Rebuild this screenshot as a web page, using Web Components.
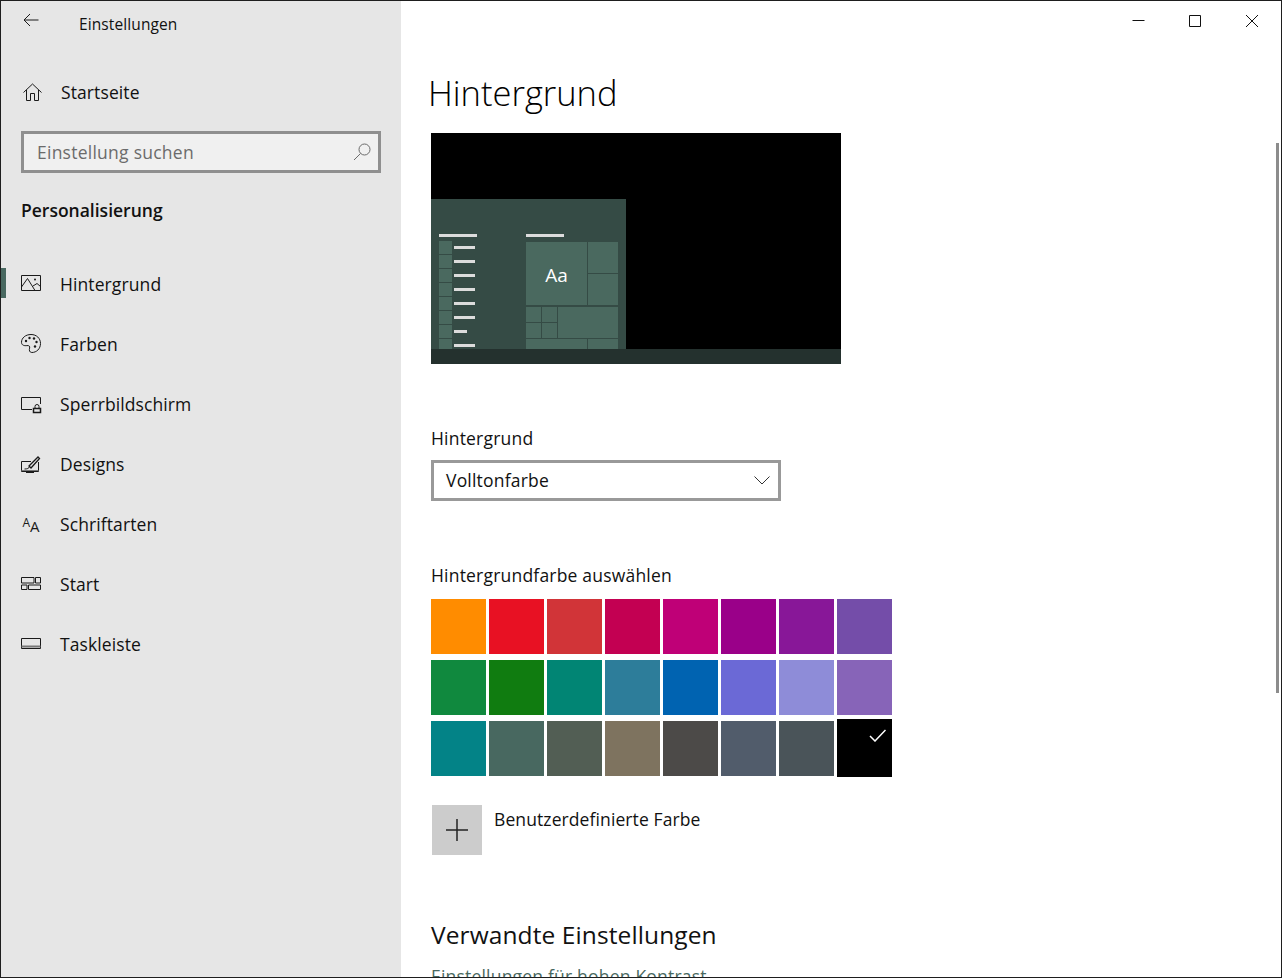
<!DOCTYPE html>
<html lang="de">
<head>
<meta charset="utf-8">
<title>Einstellungen</title>
<style>
  html, body { margin: 0; height: 100%; overflow: hidden; background: #fff; }
  body { font-family: "Open Sans", "Noto Sans", sans-serif; color: #111; }
</style>
</head>
<body>
<settings-window>
  <settings-sidebar slot="sidebar">
    <nav-item label="Hintergrund" icon="image" active></nav-item>
    <nav-item label="Farben" icon="palette"></nav-item>
    <nav-item label="Sperrbildschirm" icon="lock"></nav-item>
    <nav-item label="Designs" icon="brush"></nav-item>
    <nav-item label="Schriftarten" icon="fonts"></nav-item>
    <nav-item label="Start" icon="start"></nav-item>
    <nav-item label="Taskleiste" icon="taskbar"></nav-item>
  </settings-sidebar>
  <background-page slot="main"></background-page>
</settings-window>

<script>
  const ICONS = {
    image: `<path d="M1.500 2.500h19v15h-19z"/><path d="M1.500 14l6-8.500L15 17.500"/><path d="M13 13l4-2.500 3.500 3"/><circle cx="15" cy="6.500" r="1" fill="#1a1a1a" stroke="none"/>`,
    palette: `<path d="M11 1.500c-5.500 0-9.500 3.500-9.500 7.800 0 3.200 3.200 3.600 5.400 3.300 2.100-.3 3.300.7 2.700 2.500-.6 1.800-.2 4.400 2.200 4.400 4.800 0 8.700-3.700 8.700-9 0-5.200-4-9-9.500-9z"/><circle cx="6" cy="8" r="1.200" fill="#1a1a1a" stroke="none"/><circle cx="9.500" cy="5" r="1.200" fill="#1a1a1a" stroke="none"/><circle cx="14" cy="5.500" r="1.200" fill="#1a1a1a" stroke="none"/><circle cx="16.500" cy="9" r="1.200" fill="#1a1a1a" stroke="none"/><circle cx="15" cy="13.500" r="1.200" fill="#1a1a1a" stroke="none"/>`,
    lock: `<path d="M12 16.500H1.500v-12h19V11"/><path d="M13.500 15.500h7v4h-7z" stroke-width="1.500"/><path d="M15 15.500V13.500a2 2 0 0 1 4 0v2"/>`,
    brush: `<path d="M11 8.500H1.500v10h17V9"/><path d="M1.500 17.500h17" stroke="#777"/><path d="M10 18.500v1.500M6 19.500h8"/><path d="M9 13l9-9 1.500 1.500-8.500 9.500z" stroke-width="1.300"/><path d="M4.500 16c2.500 0 4.500-.5 5-2.500"/>`,
    fonts: `<text x="2.500" y="13.500" font-size="12" font-family="Open Sans" fill="#1a1a1a" stroke="none">A</text><text x="10" y="19" font-size="15" font-family="Open Sans" fill="#1a1a1a" stroke="none">A</text>`,
    start: `<path d="M1.500 4.500h12.500v5.500H1.500zM15.500 4.500h5v5.500h-5zM1.500 12h5.500v4.500H1.500zM8.500 12h12v4.500h-12z"/>`,
    taskbar: `<path d="M1.500 5.500h19v10h-19z"/><path d="M1.500 13.500h19" stroke-width="2" stroke="#777"/>`
  };

  class SettingsWindow extends HTMLElement {
    constructor() {
      super();
      this.attachShadow({ mode: "open" });
      this.shadowRoot.innerHTML = `
        <style>
          :host {
            display: grid;
            grid-template-columns: 400px 1fr;
            box-sizing: border-box;
            width: 1282px;
            height: 978px;
            border: 1px solid #1e1e1e;
            overflow: hidden;
            background: #fff;
          }
          .main { position: relative; min-width: 0; height: 976px; overflow: hidden; }
          .controls {
            display: flex;
            justify-content: flex-end;
            position: absolute;
            top: 0;
            right: 0;
          }
          .controls svg { display: block; width: 57px; height: 40px; fill: none; stroke: #111; stroke-width: 1; }
          .scroll {
            position: absolute;
            top: 142px;
            right: 2px;
            width: 3px;
            height: 550px;
            background: #8c8c8c;
          }
        </style>
        <slot name="sidebar"></slot>
        <div class="main">
          <slot name="main"></slot>
          <div class="controls">
            <svg viewBox="0 0 57 40"><path d="M22.500 19.500h12"/></svg>
            <svg viewBox="0 0 57 40"><path d="M22.500 14.500h11v11h-11z"/></svg>
            <svg viewBox="0 0 57 40"><path d="M22 14l12 12M34 14l-12 12"/></svg>
          </div>
          <div class="scroll"></div>
        </div>
      `;
    }
  }

  class SettingsSidebar extends HTMLElement {
    constructor() {
      super();
      this.attachShadow({ mode: "open" });
      this.shadowRoot.innerHTML = `
        <style>
          :host {
            display: block;
            height: 976px;
            background: #e6e6e6;
            font-size: 17.5px;
            letter-spacing: .1px;
          }
          svg { display: block; fill: none; stroke: #1a1a1a; stroke-width: 1; }
          .title { display: flex; align-items: center; height: 45px; padding-left: 22px; }
          .title svg { width: 16px; height: 14px; margin-top: -7px; }
          .title span { margin-left: 40px; font-size: 15.5px; margin-top: 1px; }
          .home { display: flex; align-items: center; height: 60px; margin-top: 16px; padding-left: 21px; }
          .home svg { width: 20px; height: 20px; margin-right: 19px; }
          .search {
            box-sizing: border-box;
            display: flex;
            align-items: center;
            justify-content: space-between;
            width: 360px;
            height: 42px;
            margin: 9px 0 0 20px;
            padding: 0 6px 0 13px;
            border: 3px solid #8f8f8f;
            background: #f0f0f0;
            color: #6b6b6b;
            letter-spacing: .25px;
          }
          .search span { margin-top: -1px; }
          .search svg { width: 20px; height: 20px; stroke: #6b6b6b; }
          h2 { margin: 24px 0 0 20px; height: 26px; font-size: 17.5px; line-height: 26px; font-weight: 600; letter-spacing: 0; }
          .nav { margin-top: 30px; }
        </style>
        <div class="title">
          <svg viewBox="0 0 16 14"><path d="M15.500 7H1M7 1L1 7l6 6"/></svg>
          <span>Einstellungen</span>
        </div>
        <div class="home">
          <svg viewBox="0 0 20 20"><path d="M1.500 10.500L10.500 2l9 8.500M4.500 8v10.500h4v-7h4v7h4V8"/></svg>
          <span>Startseite</span>
        </div>
        <div class="search">
          <span>Einstellung suchen</span>
          <svg viewBox="0 0 20 20"><circle cx="12.500" cy="7.500" r="5.500"/><path d="M8.500 11.500L2 18"/></svg>
        </div>
        <h2>Personalisierung</h2>
        <div class="nav"><slot></slot></div>
      `;
    }
  }

  class NavItem extends HTMLElement {
    constructor() {
      super();
      this.attachShadow({ mode: "open" });
    }

    connectedCallback() {
      const label = this.getAttribute("label") || "";
      const icon = ICONS[this.getAttribute("icon")] || "";
      this.shadowRoot.innerHTML = `
        <style>
          :host { display: flex; align-items: center; position: relative; height: 60px; padding-left: 19px; }
          :host([active])::before {
            content: "";
            position: absolute;
            left: 0;
            top: 15px;
            width: 5px;
            height: 30px;
            background: #486860;
          }
          svg { display: block; width: 22px; height: 20px; margin-right: 18px; overflow: visible; fill: none; stroke: #1a1a1a; stroke-width: 1; }
          span { margin-top: 1px; }
        </style>
        <svg viewBox="0 0 22 20">${icon}</svg>
        <span>${label}</span>
      `;
    }
  }

  class DesktopPreview extends HTMLElement {
    constructor() {
      super();
      this.attachShadow({ mode: "open" });
      const rows = [21, 21, 21, 21, 21, 21, 13, 21]
        .map(w => `<i class="cell"></i><b style="width:${w}px"></b>`).join("");
      this.shadowRoot.innerHTML = `
        <style>
          :host {
            display: flex;
            flex-direction: column;
            justify-content: flex-end;
            width: 410px;
            height: 231px;
            background: #000;
          }
          .menu {
            display: flex;
            box-sizing: border-box;
            width: 195px;
            height: 150px;
            padding: 35px 0 0 8px;
            background: #354b45;
            overflow: hidden;
          }
          .bar { display: block; height: 3px; background: #dcdcdc; width: 38px; }
          .apps { width: 87px; }
          .list {
            display: grid;
            grid-template-columns: 13px 1fr;
            grid-auto-rows: 13px;
            row-gap: 1px;
            column-gap: 2px;
            align-items: center;
            margin-top: 4px;
          }
          .list .cell { display: block; height: 13px; background: #4a695f; }
          .list b { display: block; height: 3px; background: #dcdcdc; }
          .grid {
            display: grid;
            grid-template-columns: 15px 15px 29px 30px;
            grid-template-rows: 31px 31px 0 15px 15px 15px;
            gap: 1px;
            margin-top: 5px;
          }
          .grid div { background: #4a695f; }
          .aa {
            grid-column: 1 / 4;
            grid-row: 1 / 3;
            display: flex;
            align-items: center;
            justify-content: center;
            padding-top: 2px;
            color: #fff;
            font-size: 19px;
          }
          .taskbar { height: 15px; background: #24312e; }
        </style>
        <div class="menu">
          <div class="apps">
            <span class="bar"></span>
            <div class="list">${rows}</div>
          </div>
          <div class="tiles">
            <span class="bar"></span>
            <div class="grid">
              <div class="aa">Aa</div>
              <div style="grid-column:4;grid-row:1"></div>
              <div style="grid-column:4;grid-row:2"></div>
              <div style="grid-column:1;grid-row:4"></div>
              <div style="grid-column:2;grid-row:4"></div>
              <div style="grid-column:1;grid-row:5"></div>
              <div style="grid-column:2;grid-row:5"></div>
              <div style="grid-column:3 / 5;grid-row:4 / 6"></div>
              <div style="grid-column:1 / 4;grid-row:6"></div>
              <div style="grid-column:4;grid-row:6"></div>
            </div>
          </div>
        </div>
        <div class="taskbar"></div>
      `;
    }
  }

  class ColorPicker extends HTMLElement {
    constructor() {
      super();
      this.attachShadow({ mode: "open" });
      const colors = [
        "#ff8c00", "#e81123", "#d13438", "#c30052", "#bf0077", "#9a0089", "#881798", "#744da9",
        "#10893e", "#107c10", "#018574", "#2d7d9a", "#0063b1", "#6b69d6", "#8e8cd8", "#8764b8",
        "#038387", "#486860", "#525e54", "#7e735f", "#4c4a48", "#515c6b", "#4a5459", "#000000"
      ];
      const cells = colors.map(c => c === "#000000"
        ? `<div class="sel" style="background:${c}"><svg viewBox="0 0 17 13"><path d="M1 7l5 5L16.500 1"/></svg></div>`
        : `<div style="background:${c}"></div>`).join("");
      this.shadowRoot.innerHTML = `
        <style>
          :host {
            display: grid;
            grid-template-columns: repeat(8, 55px);
            grid-auto-rows: 55px;
            column-gap: 3px;
            row-gap: 6px;
          }
          .sel { position: relative; height: 58px; margin-top: -2px; }
          svg { position: absolute; top: 10px; left: 32px; width: 17px; height: 13px; fill: none; stroke: #fff; stroke-width: 1.5; }
        </style>
        ${cells}
      `;
    }
  }

  class BackgroundPage extends HTMLElement {
    constructor() {
      super();
      this.attachShadow({ mode: "open" });
      this.shadowRoot.innerHTML = `
        <style>
          :host {
            display: block;
            box-sizing: border-box;
            height: 976px;
            padding: 0 0 0 30px;
            overflow: hidden;
            font-size: 17.5px;
            letter-spacing: .2px;
            color: #111;
          }
          h1 { margin: 68px 0 0 -3px; height: 47px; font-size: 34.5px; line-height: 47px; font-weight: 300; letter-spacing: 0; color: #000; }
          desktop-preview { margin-top: 17px; letter-spacing: 0; }
          .label { height: 24px; line-height: 24px; }
          .bg-label { margin-top: 62px; }
          .select {
            box-sizing: border-box;
            display: flex;
            align-items: center;
            justify-content: space-between;
            width: 350px;
            height: 41px;
            margin-top: 10px;
            padding: 0 8px 0 12px;
            border: 3px solid #999;
          }
          .select span { margin-top: -1px; }
          .select svg { display: block; width: 16px; height: 9px; fill: none; stroke: #333; stroke-width: 1; }
          .color-label { margin-top: 62px; }
          color-picker { margin-top: 12px; }
          .custom { display: flex; margin: 29px 0 0 1px; }
          .plus { display: flex; align-items: center; justify-content: center; width: 50px; height: 50px; background: #ccc; }
          .plus svg { display: block; width: 24px; height: 24px; fill: none; stroke: #222; stroke-width: 1.5; }
          .custom span { margin: 2px 0 0 12px; height: 24px; line-height: 24px; letter-spacing: .1px; }
          h2 { margin: 62px 0 0; height: 36px; font-size: 24.5px; line-height: 36px; font-weight: 400; letter-spacing: .1px; }
          a { display: block; margin-top: 11px; height: 24px; line-height: 24px; color: #486860; }
        </style>
        <h1>Hintergrund</h1>
        <desktop-preview></desktop-preview>
        <div class="label bg-label">Hintergrund</div>
        <div class="select">
          <span>Volltonfarbe</span>
          <svg viewBox="0 0 16 9"><path d="M.5.5L8 8l7.500-7.500"/></svg>
        </div>
        <div class="label color-label">Hintergrundfarbe auswählen</div>
        <color-picker></color-picker>
        <div class="custom">
          <div class="plus"><svg viewBox="0 0 24 24"><path d="M12 1v22M1 12h22"/></svg></div>
          <span>Benutzerdefinierte Farbe</span>
        </div>
        <h2>Verwandte Einstellungen</h2>
        <a>Einstellungen für hohen Kontrast</a>
      `;
    }
  }

  customElements.define("settings-window", SettingsWindow);
  customElements.define("settings-sidebar", SettingsSidebar);
  customElements.define("nav-item", NavItem);
  customElements.define("desktop-preview", DesktopPreview);
  customElements.define("color-picker", ColorPicker);
  customElements.define("background-page", BackgroundPage);
</script>
</body>
</html>
